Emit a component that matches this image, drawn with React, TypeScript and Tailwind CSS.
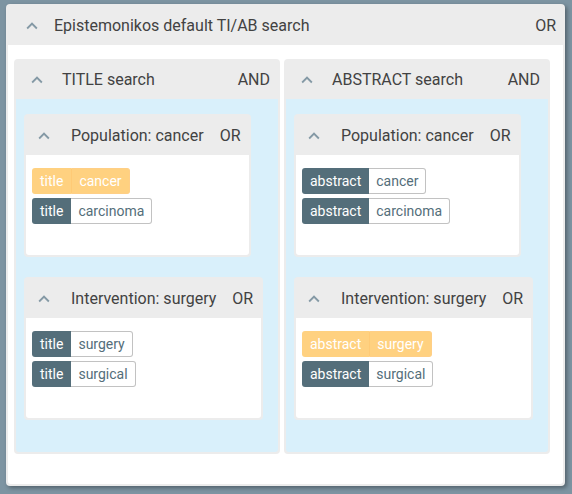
import React from "react";

const Chevron = () => (
  <svg width="22" height="22" viewBox="0 0 24 24" className="shrink-0">
    <path d="M12 8l-6 6 1.41 1.41L12 10.83l4.59 4.58L18 14z" fill="#8499a5" />
  </svg>
);

type Chip = { label: string; term: string; hl?: boolean };

const ChipRow = ({ c }: { c: Chip }) =>
  c.hl ? (
    <div className="flex h-[26px] text-[14px] leading-none text-white">
      <div className="flex items-center rounded-l-[3px] bg-[#ffd180] px-[8px]">{c.label}</div>
      <div className="flex items-center rounded-r-[3px] border border-[#ffcf86] border-l-[#ffca75] bg-[#ffd180] px-[7px]">{c.term}</div>
    </div>
  ) : (
    <div className="flex h-[26px] text-[14px] leading-none">
      <div className="flex items-center rounded-l-[3px] bg-[#546e7a] px-[8px] text-white">{c.label}</div>
      <div className="flex items-center rounded-r-[3px] border border-l-0 border-[#c2c2c2] bg-white px-[7px] text-[#546e7a]">{c.term}</div>
    </div>
  );

const InnerCard = ({ title, chips }: { title: string; chips: Chip[] }) => (
  <div className="flex flex-col rounded-[4px] bg-[#ececec] p-[2px]">
    <div className="flex h-[39px] items-center pr-[8px] text-[16px] text-[#424242]">
      <div className="flex w-[45px] pl-[7px]">
        <Chevron />
      </div>
      <span>{title}</span>
      <span className="ml-[16px]">OR</span>
    </div>
    <div className="flex h-[100px] flex-col items-start gap-[4px] rounded-b-[3px] bg-white pl-[6px] pt-[13px]">
      {chips.map((c, i) => (
        <ChipRow key={i} c={c} />
      ))}
    </div>
  </div>
);

const Column = ({
  title,
  cards,
}: {
  title: string;
  cards: { title: string; chips: Chip[] }[];
}) => (
  <div className="flex h-[395px] w-[266px] flex-col rounded-[4px] bg-[#ececec] p-[2px]">
    <div className="flex h-[38px] items-center pr-[8px] text-[16px] text-[#424242]">
      <div className="flex w-[46px] pl-[10px]">
        <Chevron />
      </div>
      <span className="flex-1">{title}</span>
      <span>AND</span>
    </div>
    <div className="flex flex-1 flex-col items-start gap-[20px] rounded-b-[3px] bg-[#d9f0fb] pl-[8px] pt-[15px]">
      {cards.map((c, i) => (
        <InnerCard key={i} title={c.title} chips={c.chips} />
      ))}
    </div>
  </div>
);

export default function App() {
  return (
    <div
      className="h-[494px] w-[572px] overflow-hidden bg-[#7d94a2] pl-[6px] pt-[4px]"
      style={{ fontFamily: "Roboto, 'Noto Sans', sans-serif" }}
    >
      <div className="flex h-[482px] w-[559px] flex-col rounded-[4px] bg-[#ececec] p-[2px] shadow-[2px_2px_4px_rgba(0,0,0,0.35)]">
        <div className="flex h-[39px] items-center pr-[7px] text-[16px] text-[#424242]">
          <div className="flex w-[46px] pl-[13px]">
            <Chevron />
          </div>
          <span className="flex-1">Epistemonikos default TI/AB search</span>
          <span>OR</span>
        </div>
        <div className="flex flex-1 gap-[4px] rounded-b-[3px] bg-white pl-[6px] pt-[14px]">
          <Column
            title="TITLE search"
            cards={[
              {
                title: "Population: cancer",
                chips: [
                  { label: "title", term: "cancer", hl: true },
                  { label: "title", term: "carcinoma" },
                ],
              },
              {
                title: "Intervention: surgery",
                chips: [
                  { label: "title", term: "surgery" },
                  { label: "title", term: "surgical" },
                ],
              },
            ]}
          />
          <Column
            title="ABSTRACT search"
            cards={[
              {
                title: "Population: cancer",
                chips: [
                  { label: "abstract", term: "cancer" },
                  { label: "abstract", term: "carcinoma" },
                ],
              },
              {
                title: "Intervention: surgery",
                chips: [
                  { label: "abstract", term: "surgery", hl: true },
                  { label: "abstract", term: "surgical" },
                ],
              },
            ]}
          />
        </div>
      </div>
    </div>
  );
}
